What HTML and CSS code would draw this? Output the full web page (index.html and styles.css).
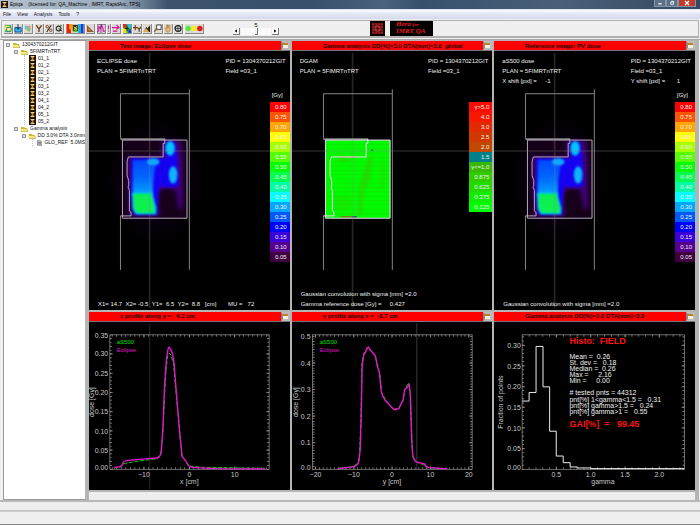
FILE: index.html
```html
<!DOCTYPE html>
<html lang="en">
<head>
<meta charset="utf-8">
<title>Epiqa</title>
<link rel="stylesheet" href="styles.css">
</head>
<body>
<svg class="defs" aria-hidden="true">
  <defs>
    <filter id="soft" x="-20%" y="-20%" width="140%" height="140%"><feGaussianBlur stdDeviation="4"/></filter>
    <filter id="softer" x="-40%" y="-40%" width="180%" height="180%"><feGaussianBlur stdDeviation="7"/></filter>
    <radialGradient id="halo"><stop offset="0.5" stop-color="#0c0012"/><stop offset="1" stop-color="#000"/></radialGradient>
    <linearGradient id="depth" x1="0" y1="0" x2="0" y2="1"><stop offset="0" stop-color="#0048ff"/><stop offset="0.5" stop-color="#0068ff"/><stop offset="1" stop-color="#00a8ff"/></linearGradient>
    <pattern id="stripes" width="60" height="13" patternUnits="userSpaceOnUse"><rect width="60" height="13" fill="#00fb00"/><rect y="6" width="60" height="2" fill="#10e400"/></pattern>
    <symbol id="folder" viewBox="0 0 8 6"><path d="M1 1h3l1 1h2v4H1z" fill="#c8b830"/><path d="M0 3h6l2 3H1z" fill="#f4ec80"/><path d="M1 6h7V3" fill="none" stroke="#77701c" stroke-width=".6"/></symbol>
    <symbol id="beam" viewBox="0 0 7 7"><rect width="7" height="7" fill="#1c150c"/><path d="M1 1h5L4 3.5 6 6H1l2-2.500z" fill="#c98a35"/><path d="M2 1.500h3M2 5.500h3" stroke="#ffe09a" stroke-width=".8"/></symbol>
    <symbol id="page" viewBox="0 0 6 6"><path d="M.5.500h3.500l1.500 1.500v3.500h-5z" fill="#ddd" stroke="#555" stroke-width=".7"/><path d="M1.500 2.500h3M1.500 4h3" stroke="#333" stroke-width=".7"/></symbol>
    <g id="jaws" fill="none" stroke="#858585" stroke-width="3">
      <path d="M104 158V22H312M312 9V554M104 554V391"/>
      <path d="M104 159H238" stroke-width="5"/>
    </g>
    <g id="leaves" fill="none" stroke="#b6a8bc" stroke-width="3">
      <path d="M110 162H305V398H110Z"/>
      <path d="M238 158V172H233V213H128L124 226V270L129 284V300L127 304L131 314V376L136 380V391H104"/>
    </g>
    <g id="cross" fill="none" stroke="#8a8a8a" stroke-opacity=".27" stroke-width="5"><path d="M192 -102V669M9 195H615"/></g>
    <g id="dose">
      <ellipse cx="205" cy="285" rx="148" ry="190" fill="url(#halo)"/>
      <rect x="110" y="162" width="195" height="236" fill="#160019"/>
      <path d="M125 212H228V163H285L292 230V370H280L270 312L228 312L222 392H130Z" fill="#40007c" filter="url(#softer)"/>
      <path d="M137 217H240V166H270L276 215L280 300L262 305L222 303L214 388H144L135 330Z" fill="#1600f0" filter="url(#soft)"/>
      <path d="M142 222H212L203 285L202 330H140Z" fill="url(#depth)" filter="url(#soft)"/>
      <ellipse cx="203" cy="228" rx="19" ry="11" fill="#10a8ff" filter="url(#soft)"/>
      <ellipse cx="254" cy="187" rx="14" ry="22" fill="#00c4ff" filter="url(#soft)"/>
      <ellipse cx="263" cy="267" rx="13" ry="26" fill="#10b4ff" filter="url(#soft)"/>
      <path d="M139 322H200L212 366V386H150L141 370Z" fill="#00d8c8" filter="url(#soft)"/>
      <path d="M145 326H195L205 366V381H153L145 362Z" fill="#08f050" filter="url(#soft)"/>
      <rect x="222" y="314" width="44" height="62" rx="12" fill="#19001f" filter="url(#soft)"/>
    </g>
  </defs>
</svg>

<header class="titlebar">
  <svg class="app-icon"><use href="#beam"/></svg>
  <h1>Epiqa &nbsp; &nbsp;(licensed for: QA_Machine , IMRT, RapidArc, TPS)</h1>
  <div class="window-buttons">
    <button aria-label="Minimize"><svg viewBox="0 0 12 6"><path d="M4 4h4" stroke="#fff" stroke-width="1.500"/></svg></button>
    <button aria-label="Restore"><svg viewBox="0 0 12 6"><path d="M5 1h3v3.500H4.500V2H7" stroke="#fff" fill="none"/></svg></button>
    <button class="close" aria-label="Close"><svg viewBox="0 0 12 6"><path d="M4 1l4 4M8 1L4 5" stroke="#fff" stroke-width="1.300"/></svg></button>
  </div>
</header>

<nav class="menu">
  <button>File</button><button>View</button><button>Analysis</button><button>Tools</button><button>?</button>
</nav>

<div class="toolbar">
  <div class="tools">
    <div class="tool-group">
      <button aria-label="Open"><svg viewBox="0 0 9 10"><rect x="1" y="1" width="7" height="8" fill="#4caf60"/><path d="M1 2h5v5H1z" fill="#f6e85a"/><path d="M3 4h5v4H3z" fill="#fff8b0" stroke="#288a50"/></svg></button>
      <button aria-label="Import"><svg viewBox="0 0 9 10"><path d="M1 4h7v5H1z" fill="#38b8ee" stroke="#0a5088"/><path d="M4.500 0v6M3 4l1.500 2L6 4" stroke="#103060" fill="none"/></svg></button>
      <button aria-label="Copy"><svg viewBox="0 0 9 10"><path d="M1 2h4v4H1z" fill="#6bc1e8"/><path d="M4 3l4 2-2 4-3-2z" fill="#94be70"/><circle cx="6" cy="3" r="1.500" fill="#e6a05a"/></svg></button>
    </div>
    <div class="tool-group">
      <button aria-label="Filter"><svg viewBox="0 0 9 10"><path d="M1.500 1.500l3 4v3.500M7.500 1.500l-3 4" stroke="#6e3a18" stroke-width="1.500" fill="none"/></svg></button>
      <button aria-label="Percent"><svg viewBox="0 0 9 10"><path d="M2 9l5-8" stroke="#402818" stroke-width="1.200"/><circle cx="2.500" cy="3" r="1.400" fill="none" stroke="#804020"/><circle cx="6.500" cy="7" r="1.400" fill="none" stroke="#804020"/></svg></button>
      <button aria-label="Rotate"><svg viewBox="0 0 9 10"><circle cx="4" cy="5" r="2.700" fill="none" stroke="#222" stroke-width="1.200"/><path d="M4 5l4 3" stroke="#222"/><circle cx="6.500" cy="2" r="1.300" fill="#62a040"/></svg></button>
    </div>
    <div class="tool-group">
      <button class="wide" aria-label="Colour table"><svg viewBox="0 0 19 10"><path fill="#e02810" d="M0 0h5v10H0z"/><path fill="#ff9a10" d="M3 0h4v6H3z"/><path fill="#f0d830" d="M6 2h3v7H6z"/><path fill="#222" d="M7 1h6v7H7z"/><path fill="#50b830" d="M9 4h3v5H9z"/><path fill="#10b0d0" d="M13 0h3v10h-3z"/><path fill="#1838e0" d="M16 0h3v10h-3z"/><path d="M8 3l4 3M12 2L8 7" stroke="#f5d840"/></svg></button>
      <button aria-label="Measure"><svg viewBox="0 0 9 10"><path d="M1 1v8h8z" fill="#9b5928"/><path d="M3 5v2h2z" fill="#e6c8a0"/></svg></button>
    </div>
    <div class="tool-group">
      <button class="pressed" aria-label="Profiles"><svg viewBox="0 0 9 10"><path d="M0 8h2V3l2 2 1-4 2 5v2h2" stroke="#f010b8" fill="none" stroke-width="1.300"/><path d="M4.500 0v10" stroke="#333" stroke-width=".7"/></svg></button>
      <button class="narrow" aria-label="Marker"><svg viewBox="0 0 4 10"><path d="M2 1v5M2 7.500V9" stroke="#e010b0" stroke-width="1.500"/></svg></button>
      <button aria-label="Shift"><svg viewBox="0 0 9 10"><path d="M0 4h7M5 1l3 3-3 2M1 8h5" stroke="#d01098" fill="none" stroke-width="1.300"/></svg></button>
    </div>
    <div class="tool-group">
      <button aria-label="Dose map"><svg viewBox="0 0 9 10"><path fill="#28c840" d="M0 0h9v10H0z"/><path fill="#f02020" d="M0 0h4v4H0z"/><path fill="#20c0f0" d="M5 0h4v4H5z"/><path fill="#f8e020" d="M0 5h4v5H0z"/><path fill="#2038e0" d="M6 6h3v4H6z"/><path d="M4.500 2v6M2 5h5" stroke="#111"/></svg></button>
      <button aria-label="Point"><svg viewBox="0 0 9 10"><path d="M0 4h5M2.500 1v6M5 4l2 2 2-3M7 6v3" stroke="#70300e" fill="none" stroke-width="1.200"/></svg></button>
      <button aria-label="Levels"><svg viewBox="0 0 9 10"><path d="M1 8l3-5 1 2 3-4v8H1z" fill="#28221c"/><path d="M1 7l3-2 3 4H1z" fill="#e0aa50"/></svg></button>
    </div>
    <div class="tool-group">
      <button aria-label="Magnify"><svg viewBox="0 0 9 10"><path d="M3 1h5v5H3z" fill="#fff" stroke="#333"/><path d="M3 5L0 9" stroke="#a06020" stroke-width="1.800"/></svg></button>
      <button aria-label="Pan"><svg viewBox="0 0 9 10"><path d="M1 4l2 1V1h1v3-3h1v3l1-3 1 1v4L6 9H3z" fill="#e8b86c" stroke="#9b6830" stroke-width=".5"/></svg></button>
      <button aria-label="Target"><svg viewBox="0 0 9 10"><circle cx="4.500" cy="5" r="3.300" fill="none" stroke="#222" stroke-width="1.400"/><path d="M4.500 2v6M1.500 5h6" stroke="#222" stroke-width=".8"/></svg></button>
    </div>
    <button class="wide" aria-label="Status lights"><svg viewBox="0 0 19 10"><circle cx="3" cy="5" r="3" fill="#5ce838"/><circle cx="9.500" cy="5" r="3" fill="#f6ee20"/><circle cx="16" cy="5" r="3" fill="#e81818"/></svg></button>
  </div>
  <div class="stepper">
    <label for="frame">5</label>
    <div class="stepper-row">
      <button aria-label="Previous"><svg viewBox="0 0 7 7"><path d="M4.500 1.500v4L2 3.500z"/></svg></button>
      <input id="frame" type="range" min="1" max="9" value="5">
      <button aria-label="Next"><svg viewBox="0 0 7 7"><path d="M2.500 1.500v4L5 3.500z"/></svg></button>
    </div>
  </div>
  <div class="brands">
    <svg class="brand-mark" viewBox="0 0 14 14"><rect width="14" height="14" fill="#080404"/><rect x="2" y="2" width="10" height="10" fill="#a41c20"/><path d="M2 4.500h10M2 7h10M2 9.500h10M4.500 2v10M7 2v10M9.500 2v10" stroke="#4a0c10" stroke-width=".8"/><circle cx="7" cy="7" r="2.500" fill="none" stroke="#d45050" stroke-width=".7"/></svg>
    <p class="brand-name"><span>Hera <small>for</small></span><span>IMRT QA</span></p>
  </div>
</div>

<div class="workspace">
  <aside class="tree">
    <ul>
      <li><span class="node"><i class="toggle"></i><svg class="folder"><use href="#folder"/></svg>1304370212GIT</span>
        <ul>
          <li><span class="node"><i class="toggle"></i><svg class="folder"><use href="#folder"/></svg>5FIMRTnTRT</span>
            <ul class="beams">
              <li><span class="node"><svg class="beam"><use href="#beam"/></svg>01_1</span></li>
              <li><span class="node"><svg class="beam"><use href="#beam"/></svg>01_2</span></li>
              <li><span class="node"><svg class="beam"><use href="#beam"/></svg>02_1</span></li>
              <li><span class="node"><svg class="beam"><use href="#beam"/></svg>02_2</span></li>
              <li><span class="node"><svg class="beam"><use href="#beam"/></svg>03_1</span></li>
              <li><span class="node"><svg class="beam"><use href="#beam"/></svg>03_2</span></li>
              <li><span class="node"><svg class="beam"><use href="#beam"/></svg>04_1</span></li>
              <li><span class="node"><svg class="beam"><use href="#beam"/></svg>04_2</span></li>
              <li><span class="node"><svg class="beam"><use href="#beam"/></svg>05_1</span></li>
              <li><span class="node"><svg class="beam"><use href="#beam"/></svg>05_2</span></li>
            </ul>
          </li>
          <li><span class="node"><i class="toggle"></i><svg class="folder"><use href="#folder"/></svg>Gamma analysis</span>
            <ul>
              <li><span class="node"><i class="toggle"></i><svg class="folder"><use href="#folder"/></svg>DD 3.0% DTA 3.0mm</span>
                <ul class="results"><li><span class="node"><svg class="page"><use href="#page"/></svg>GLO_REF &nbsp;5.0MS</span></li></ul>
              </li>
            </ul>
          </li>
        </ul>
      </li>
    </ul>
  </aside>

  <main class="panels">
    <section class="panel">
      <header><h2>Test image: Eclipse dose</h2><button aria-label="Maximize Test image"></button></header>
      <div class="view">
        <svg viewBox="9 -102 606 771"><use href="#dose"/><use href="#jaws"/><use href="#leaves"/><use href="#cross"/></svg>
        <div class="overlay">
          <div class="info"><p>ECLIPSE dose<br>PLAN = 5FIMRTnTRT</p><p>PID = 1304370212GIT<br>Field =03_1</p></div>
          <div class="scale"><p>[Gy]</p>
            <ol class="dose-scale"><li>0.80</li><li>0.75</li><li>0.70</li><li>0.65</li><li>0.60</li><li>0.55</li><li>0.50</li><li>0.45</li><li>0.40</li><li>0.35</li><li>0.30</li><li>0.25</li><li>0.20</li><li>0.15</li><li>0.10</li><li>0.05</li></ol>
          </div>
          <p class="foot">X1= 14.7 &nbsp;X2= -0.5 &nbsp;Y1= &nbsp;6.5 &nbsp;Y2= &nbsp;8.8 &nbsp; [cm] &nbsp; &nbsp; &nbsp; MU = &nbsp; 72</p>
        </div>
      </div>
    </section>

    <section class="panel">
      <header><h2>Gamma analysis DD[%]=3.0 DTA[mm]=3.0 &nbsp;global</h2><button aria-label="Maximize Gamma analysis"></button></header>
      <div class="view">
        <svg viewBox="9 -102 606 771">
          <rect x="111" y="162" width="195" height="236" fill="url(#stripes)"/>
          <g filter="url(#soft)" fill="#38c800" fill-opacity=".5"><path d="M238 215h16l-8 70-18 30-8 75h-14l6-90z"/><ellipse cx="282" cy="265" rx="8" ry="50" fill-opacity=".3"/><ellipse cx="165" cy="222" rx="22" ry="6"/><ellipse cx="162" cy="350" rx="26" ry="26" fill-opacity=".25"/></g>
          <path d="M152 213H210" stroke="#c08038" stroke-width="3"/>
          <path d="M150 392h54v4h-40z" fill="#985a18"/><path d="M190 394h14" stroke="#2050a0" stroke-width="4"/><circle cx="251" cy="193" r="3" fill="#1c5a80"/>
          <use href="#jaws"/><g class="bright"><use href="#leaves"/></g><use href="#cross"/>
        </svg>
        <div class="overlay">
          <div class="info"><p>DGAM<br>PLAN = 5FIMRTnTRT</p><p>PID = 1304370212GIT<br>Field =03_1</p></div>
          <div class="scale"><p>&nbsp;</p>
            <ol class="gamma-scale"><li>γ&gt;5.0</li><li>4.0</li><li>3.0</li><li>2.5</li><li>2.0</li><li>1.5</li><li>γ&lt;=1.0</li><li>0.875</li><li>0.625</li><li>0.375</li><li>0.125</li></ol>
          </div>
          <p class="foot">Gaussian convolution with sigma [mm] =2.0<br>Gamma reference dose [Gy] = &nbsp; &nbsp; 0.427</p>
        </div>
      </div>
    </section>

    <section class="panel">
      <header><h2>Reference image: PV dose</h2><button aria-label="Maximize Reference image"></button></header>
      <div class="view">
        <svg viewBox="9 -102 606 771"><use href="#dose"/><use href="#jaws"/><use href="#leaves"/><use href="#cross"/></svg>
        <div class="overlay">
          <div class="info"><p>aS500 dose<br>PLAN = 5FIMRTnTRT<br>X shift [pxl] = &nbsp; &nbsp; -1</p><p>PID = 1304370212GIT<br>Field =03_1<br>Y shift [pxl] = &nbsp; &nbsp; &nbsp; 1</p></div>
          <div class="scale"><p>[Gy]</p>
            <ol class="dose-scale"><li>0.80</li><li>0.75</li><li>0.70</li><li>0.65</li><li>0.60</li><li>0.55</li><li>0.50</li><li>0.45</li><li>0.40</li><li>0.35</li><li>0.30</li><li>0.25</li><li>0.20</li><li>0.15</li><li>0.10</li><li>0.05</li></ol>
          </div>
          <p class="foot">Gaussian convolution with sigma [mm] =2.0</p>
        </div>
      </div>
    </section>

    <section class="panel">
      <header><h2>x profile along y = &nbsp; 6.3 cm</h2><button aria-label="Maximize x profile"></button></header>
      <div class="view">
        <svg class="chart" viewBox="9 48 606 501">
          <path d="M192 48V549" stroke="#1c1c1c" stroke-width="5"/>
          <rect class="frame" x="72" y="83" width="481" height="406"/>
          <g class="minor x" stroke-dasharray="2 11.700"><path d="M78 86H553"/><path d="M78 486H553"/></g>
          <g class="minor y" stroke-dasharray="2 9.600"><path d="M75 490V83"/><path d="M550 490V83"/></g>
          <path class="major" d="M175 83v9m0 397v-9M312 83v9m0 397v-9M449 83v9m0 397v-9M72 140h9m472 0h-9M72 199h9m472 0h-9M72 257h9m472 0h-9M72 315h9m472 0h-9M72 373h9m472 0h-9M72 431h9m472 0h-9"/>
          <g class="ylabels"><text x="67" y="94">0.35</text><text x="67" y="148">0.30</text><text x="67" y="207">0.25</text><text x="67" y="265">0.20</text><text x="67" y="323">0.15</text><text x="67" y="381">0.10</text><text x="67" y="439">0.05</text><text x="67" y="491">0.00</text></g>
          <g class="xlabels"><text x="175" y="513">−10</text><text x="312" y="513">0</text><text x="449" y="513">10</text><text x="312" y="533">x [cm]</text></g>
          <text class="axis" transform="translate(25 286) rotate(-90)">dose [Gy]</text>
          <path class="plan" d="M84 485L105 482L113 472L160 464L215 457L226 442L232 380L240 210L246 148L251 138L257 145L264 170L275 290L290 450L312 479L350 483L540 486"/>
          <path class="measured" d="M84 484L103 481Q110 478 112 468Q116 463 130 462L185 457L215 455Q224 452 227 437L232 370L237 240L243 155L248 125L251 120L256 127L262 142L266 170L273 260L282 370L290 450Q296 458 301 463Q306 480 320 483L390 487L540 488"/>
          <text class="key-plan" x="93" y="112">aS500</text><text class="key-measured" x="93" y="134">Eclipse</text>
        </svg>
      </div>
    </section>

    <section class="panel">
      <header><h2>y profile along x = &nbsp;-8.7 cm</h2><button aria-label="Maximize y profile"></button></header>
      <div class="view">
        <svg class="chart" viewBox="6 48 606 501">
          <path d="M383 48V489" stroke="#3a3a3a" stroke-width="3"/>
          <rect class="frame" x="68" y="83" width="482" height="406"/>
          <g class="minor x" stroke-dasharray="2 9.570"><path d="M76 86H550"/><path d="M76 486H550"/></g>
          <g class="minor y" stroke-dasharray="2 6.030"><path d="M71 490V83"/><path d="M547 490V83"/></g>
          <path class="major" d="M77 83v9m0 397v-9M193 83v9m0 397v-9M308 83v9m0 397v-9M424 83v9m0 397v-9M540 83v9m0 397v-9M68 168h9m473 0h-9M68 248h9m473 0h-9M68 328h9m473 0h-9M68 409h9m473 0h-9"/>
          <g class="ylabels"><text x="62" y="95">0.5</text><text x="62" y="176">0.4</text><text x="62" y="256">0.3</text><text x="62" y="336">0.2</text><text x="62" y="417">0.1</text><text x="62" y="491">0.0</text></g>
          <g class="xlabels"><text x="77" y="513">−20</text><text x="193" y="513">−10</text><text x="308" y="513">0</text><text x="424" y="513">10</text><text x="540" y="513">20</text><text x="308" y="533">y [cm]</text></g>
          <text class="axis" transform="translate(23 286) rotate(-90)">dose [Gy]</text>
          <path class="plan" d="M144 486L190 481L206 470L210 440L214 340L217 170L223 138L236 121L256 143L266 180L272 207L277 260L298 292L312 308L328 306L342 278L347 246L359 228L364 268L370 450L383 468L403 475L412 484L475 488"/>
          <path class="measured" d="M144 487L190 482Q205 478 208 465L212 430L215 330L218 175L223 142L229 134L232 124L237 120L243 129L258 147L263 175L270 198L275 250L280 268L288 282L297 290L305 300L315 309L329 306L336 290L341 282L346 250L355 240L360 233L363 260L366 360L369 430L372 452Q376 466 385 468L405 472Q410 482 420 484L475 488"/>
          <text class="key-plan" x="90" y="112">aS500</text><text class="key-measured" x="90" y="134">Eclipse</text>
        </svg>
      </div>
    </section>

    <section class="panel">
      <header><h2>Gamma analysis DD[%]=3.0 DTA[mm]=3.0</h2><button aria-label="Maximize histogram"></button></header>
      <div class="view">
        <svg class="chart" viewBox="3 48 606 501">
          <rect class="frame" x="88" y="83" width="490" height="406"/>
          <g class="minor x" stroke-dasharray="2 18.700"><path d="M108 86H578"/><path d="M108 486H578"/></g>
          <g class="minor y" stroke-dasharray="2 10.500"><path d="M91 490V83"/><path d="M575 490V83"/></g>
          <path class="major" d="M191 83v9m0 397v-9M295 83v9m0 397v-9M399 83v9m0 397v-9M502 83v9m0 397v-9M88 115h9m481 0h-9M88 177h9m481 0h-9M88 240h9m481 0h-9M88 302h9m481 0h-9M88 364h9m481 0h-9M88 427h9m481 0h-9"/>
          <g class="ylabels"><text x="84" y="123">0.30</text><text x="84" y="185">0.25</text><text x="84" y="248">0.20</text><text x="84" y="310">0.15</text><text x="84" y="372">0.10</text><text x="84" y="435">0.05</text><text x="84" y="491">0.00</text></g>
          <g class="xlabels"><text x="191" y="513">0.5</text><text x="295" y="513">1.0</text><text x="399" y="513">1.5</text><text x="502" y="513">2.0</text><text x="332" y="533">gamma</text></g>
          <text class="axis" transform="translate(29 286) rotate(-90)">Fraction of points</text>
          <path d="M88 283H109V257H130V118H151V240H171V374H191V449H212V469H233V482H254V485H295V487H578" fill="none" stroke="#eee" stroke-width="3"/>
          <text class="alert" x="231" y="110">Histo: &nbsp;FIELD</text>
          <g class="stats"><text x="231" y="155">Mean = &nbsp;0.26</text><text x="231" y="174">St. dev = &nbsp; 0.18</text><text x="231" y="193">Median = &nbsp;0.26</text><text x="231" y="211">Max = &nbsp; &nbsp; 2.16</text><text x="231" y="229">Min = &nbsp; &nbsp; 0.00</text><text x="231" y="266"># tested pnts = 44312</text><text x="231" y="285">pnt[%] 1&lt;gamma&lt;1.5 = &nbsp; 0.31</text><text x="231" y="303">pnt[%] gamma&gt;1.5 = &nbsp; 0.24</text><text x="231" y="322">pnt[%] gamma&gt;1 = &nbsp; 0.55</text></g>
          <text class="alert" x="231" y="360">GAI[%] &nbsp;= &nbsp; 99.45</text>
        </svg>
      </div>
    </section>
    <div class="panel-strip"></div>
  </main>
</div>
<div class="message-bar"></div>
<footer class="status"></footer>
</body>
</html>
```
FILE: styles.css
```css
* { box-sizing: border-box; }
html { height: 100%; }
body {
  margin: 0;
  min-height: 100%;
  display: flex;
  flex-direction: column;
  background: #f0f0f0;
  color: #111;
  font: 5px/7px "Liberation Sans", sans-serif;
}
h1, h2, p, ul, ol { margin: 0; padding: 0; font: inherit; }
li { list-style: none; }
button { padding: 0; border: 0; background: none; color: inherit; font: inherit; }
svg { display: block; }
.defs { position: absolute; width: 0; height: 0; }

.titlebar {
  display: flex;
  align-items: center;
  height: 10px;
  padding-left: 1px;
  gap: 2px;
  border-bottom: 1px solid #dfe5ee;
  background: linear-gradient(90deg, #b4c0cd, #9aabbd 17%, #3c526c 24%, #38506c 45%, #4a627c 55%, #36506c 60%, #4a6078 80%, #34495f);
}
.app-icon { width: 7px; height: 7px; }
.titlebar h1 { flex: 1; color: #000; white-space: nowrap; }
.window-buttons { display: flex; align-self: flex-start; margin-right: 4px; }
.window-buttons button { width: 12px; height: 7px; border: 1px solid #8496a8; border-top: 0; background: #5c7088; }
.window-buttons svg { width: 100%; height: 100%; }
.window-buttons .close { width: 18px; background: #c0392b; }

.menu {
  display: flex;
  align-items: center;
  gap: 6px;
  height: 9px;
  padding: 0 3px;
  background: linear-gradient(#fbfcfe, #e4e8f5 40%, #d4daee);
}

.toolbar {
  display: flex;
  align-items: center;
  height: 18px;
  margin: 1px 1px 0;
  padding: 0 2px;
  border: 1px solid #b0b0b0;
  border-bottom-width: 2px;
  background: #efefef;
}
.tools, .tool-group { display: flex; }
.tools { gap: 2px; flex: 0 0 229px; }
.tool-group { gap: 1px; }
.tools button { width: 9px; height: 10px; border-right: 1px solid #8a8a8a; border-bottom: 1px solid #8a8a8a; background: #dcdad4; }
.tools .wide { width: 19px; }
.tools .narrow { width: 4px; }
.tools .pressed { background: #cfcfd8; box-shadow: inset 1px 1px #888; }
.tools svg { width: 100%; height: 100%; }
.stepper { width: 46px; }
.stepper label { display: block; text-align: center; font-size: 6px; line-height: 6px; }
.stepper-row { display: flex; align-items: center; justify-content: space-between; }
.stepper button { width: 7px; height: 7px; border-right: 1px solid #777; border-bottom: 1px solid #777; background: #fafafa; }
.stepper input { appearance: none; width: 30px; height: 7px; margin: 0; background: #fafafa; }
.stepper input::-webkit-slider-thumb { appearance: none; width: 3px; height: 7px; border-right: 1px solid #777; border-bottom: 1px solid #777; background: #eee; }
.brands { display: flex; align-items: center; gap: 5px; margin-left: 91px; }
.brand-mark { width: 15px; height: 15px; }
.brand-name { display: flex; flex-direction: column; width: 43px; height: 15px; padding-left: 6px; background: #050202; color: #e81820; font: italic bold 7px/7px "Liberation Serif", serif; }
.brand-name small { font-size: 5px; }

.workspace { flex: 1; display: flex; margin-top: 1px; border-top: 1px solid #a8a8a8; }
.tree { flex: 0 0 84px; min-width: 0; margin-left: 3px; border: 1px solid #999; border-right: 2px solid #b8b8b8; background: #fff; }
.tree ul ul { margin-left: 8px; }
.tree ul .beams { margin-left: 12px; border-left: 1px dotted #bbb; }
.tree ul .results { margin-left: 12px; border-left: 1px dotted #bbb; }
.node { display: flex; align-items: center; gap: 2px; height: 7px; padding-left: 2px; white-space: nowrap; }
.beams .node, .results .node { padding-left: 4px; }
.toggle { width: 4px; height: 4px; border: 1px solid #999; background: #ddd; }
.folder { width: 8px; height: 6px; }
.beam { width: 7px; height: 7px; }
.page { width: 6px; height: 6px; }

.panels {
  flex: 1;
  min-width: 0;
  display: grid;
  grid-template-columns: repeat(3, minmax(0, 1fr));
  grid-template-rows: 268fr 178fr 8px;
  gap: 2px;
  padding: 1px 4px 0 2px;
  background: #b4b4b4;
  border-right: 1px solid #f0f0f0;
}
.panel { display: flex; flex-direction: column; min-width: 0; background: #000; }
.panel header { display: flex; align-items: center; height: 10px; padding-left: 31px; border-bottom: 1px solid #777; background: #f00; }
.panel h2 { flex: 1; color: #200000; font: bold 6px/8px "Liberation Sans", sans-serif; white-space: nowrap; }
.panel header button { width: 9px; height: 9px; border: 2px solid #bbb; border-left-color: #888; background: linear-gradient(#c08020 40%, #f4f0e0 40%); }
.view { flex: 1; display: grid; grid-template: minmax(0, 1fr) / minmax(0, 1fr); min-height: 0; }
.view > svg { grid-area: 1 / 1; width: 100%; height: 100%; min-height: 0; }
.overlay { grid-area: 1 / 1; display: flex; flex-direction: column; color: #f0f0f0; font: 6px/10px "Liberation Sans", sans-serif; }
.info { display: flex; justify-content: space-between; height: 39px; padding: 5px 4px 0 8px; white-space: nowrap; }
.scale { display: flex; flex-direction: column; align-items: flex-end; }
.scale > p { height: 12px; padding-right: 7px; }
.scale ol { width: 20px; text-align: right; }
.scale li { height: 10px; padding-right: 3px; line-height: 11px; }
.foot { margin-top: auto; padding: 0 8px 1px 9px; white-space: nowrap; }

.dose-scale li:nth-child(1) { background: #ff0000; }
.dose-scale li:nth-child(2) { background: #ff5500; }
.dose-scale li:nth-child(3) { background: #ffa500; }
.dose-scale li:nth-child(4) { background: #ffff00; }
.dose-scale li:nth-child(5) { background: #a8ff00; }
.dose-scale li:nth-child(6) { background: #55ff00; }
.dose-scale li:nth-child(7) { background: #00ff00; }
.dose-scale li:nth-child(8) { background: #00ff50; }
.dose-scale li:nth-child(9) { background: #00ffa5; }
.dose-scale li:nth-child(10) { background: #00ffff; }
.dose-scale li:nth-child(11) { background: #00a8ff; }
.dose-scale li:nth-child(12) { background: #0058ff; }
.dose-scale li:nth-child(13) { background: #0000ff; }
.dose-scale li:nth-child(14) { background: #3c00d8; }
.dose-scale li:nth-child(15) { background: #560090; }
.dose-scale li:nth-child(16) { background: #400040; }
.scale .gamma-scale { width: 23px; }
.gamma-scale li:nth-child(1) { background: #ff0a00; }
.gamma-scale li:nth-child(2) { background: #f61800; }
.gamma-scale li:nth-child(3) { background: #e22a00; }
.gamma-scale li:nth-child(4) { background: #d03800; }
.gamma-scale li:nth-child(5) { background: #c04800; }
.gamma-scale li:nth-child(6) { background: #008088; }
.gamma-scale li:nth-child(7) { background: #38b800; }
.gamma-scale li:nth-child(8) { background: #30cc00; }
.gamma-scale li:nth-child(9) { background: #20dc00; }
.gamma-scale li:nth-child(10) { background: #10ee00; }
.gamma-scale li:nth-child(11) { background: #00ff00; }
.bright { filter: brightness(1.3); }

.chart text { fill: #c8c8c8; font: 21px "Liberation Sans", sans-serif; }
.chart .ylabels text { text-anchor: end; }
.chart .xlabels text, .chart .axis { text-anchor: middle; }
.frame, .major, .minor { fill: none; stroke: #a0a0a0; stroke-width: 2; }
.minor { stroke-width: 6; }
.plan { fill: none; stroke: #00d000; stroke-width: 3; stroke-dasharray: 12 5; }
.measured { fill: none; stroke: #f010d8; stroke-width: 4; }
.chart .key-plan { fill: #00e000; font-size: 18px; }
.chart .key-measured { fill: #e010d0; font-size: 18px; }
.chart .stats text { fill: #f0f0f0; }
.chart .alert { fill: #ff1010; font-size: 27px; font-weight: bold; }
.panel-strip { grid-column: 1 / -1; background: #eee; }
.message-bar { height: 11px; border-top: 2px solid #b8b8b8; border-bottom: 1px solid #c4c4c4; background: #eee; }
.status { height: 14px; border-top: 1px solid #ccc; border-bottom: 1px solid #888; background: #f0f0f0; }
```
